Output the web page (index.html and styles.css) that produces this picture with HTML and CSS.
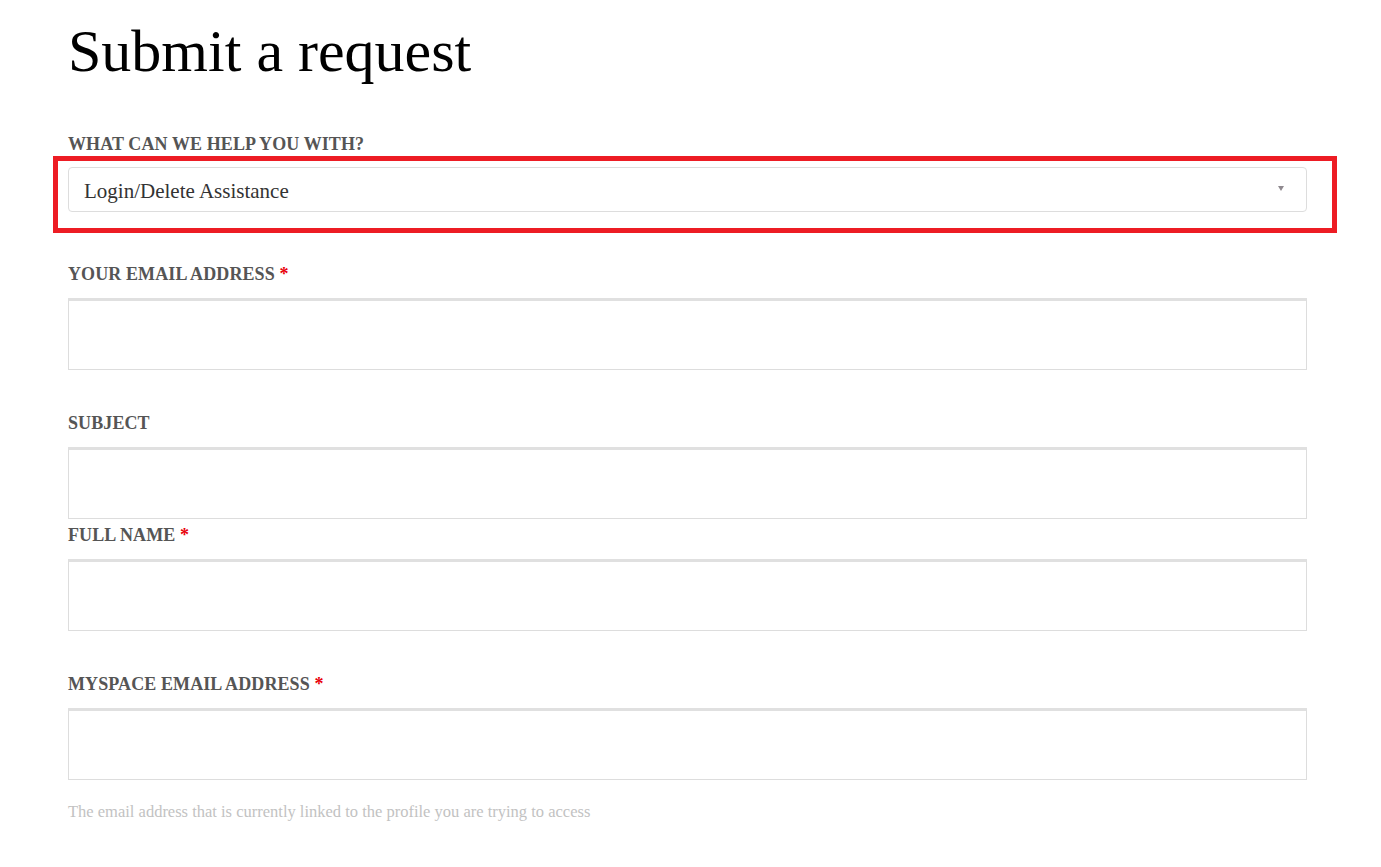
FILE: index.html
```html
<!DOCTYPE html>
<html lang="en">
  <head>
    <meta charset="UTF-8" />
    <title>Submit a request</title>
    <link rel="stylesheet" href="styles.css">
  </head>
  <body>
    <div class="request-page">
      <h1>Submit a request</h1>

      <form class="request-form">
        <div class="form-field field-type">
          <label for="ticketForm">What can we help you with?</label>
          <div class="highlight">
            <div class="select-wrap">
              <select id="ticketForm">
                <option>Login/Delete Assistance</option>
                <option>Account Settings</option>
                <option>Other</option>
              </select>
              <span class="select-arrow"></span>
            </div>
          </div>
        </div>

        <div class="form-field">
          <label for="email">Your email address <span class="required">*</span></label>
          <input type="email" id="email" />
        </div>

        <div class="form-field field-tight">
          <label for="subject">Subject</label>
          <input type="text" id="subject" />
        </div>

        <div class="form-field">
          <label for="fullName">Full name <span class="required">*</span></label>
          <input type="text" id="fullName" />
        </div>

        <div class="form-field">
          <label for="myspaceEmail">Myspace email address <span class="required">*</span></label>
          <input type="email" id="myspaceEmail" />
          <p class="hint">The email address that is currently linked to the profile you are trying to access</p>
        </div>
      </form>
    </div>
  </body>
</html>
```

FILE: styles.css
```css
body {
  margin: 0;
  font-family: "Liberation Serif", "Times New Roman", serif;
  background-color: #fff;
  color: #000;
}
.request-page {
  padding: 21px 74px 40px 68px;
}
h1 {
  margin: 0 0 52px;
  font-size: 60px;
  line-height: 60px;
  font-weight: normal;
}
.form-field {
  margin-bottom: 42px;
}
.form-field label {
  display: block;
  margin-bottom: 13px;
  font-size: 18px;
  line-height: 22px;
  font-weight: bold;
  letter-spacing: 0.1px;
  text-transform: uppercase;
  color: #555;
}
.field-type {
  margin-bottom: 30px;
}
.field-type label {
  margin-bottom: 1px;
}
.field-tight {
  margin-bottom: 5px;
}
.required {
  color: #e8000b;
}
.highlight {
  margin: 0 -30px 0 -15px;
  padding: 6px 25px 16px 10px;
  border: 5px solid #ed1c24;
}
.select-wrap {
  position: relative;
}
.select-wrap select {
  display: block;
  width: 100%;
  height: 45px;
  box-sizing: border-box;
  padding: 2px 15px 0;
  border: 1px solid #ddd;
  border-radius: 4px;
  background-color: #fff;
  font-family: "Liberation Serif", "Times New Roman", serif;
  font-size: 21px;
  color: #333;
  appearance: none;
  -webkit-appearance: none;
}
.select-arrow {
  position: absolute;
  right: 23px;
  top: 19px;
  width: 0;
  height: 0;
  border-left: 3.5px solid transparent;
  border-right: 3.5px solid transparent;
  border-top: 5px solid #8f898f;
  pointer-events: none;
}
.form-field input {
  display: block;
  width: 100%;
  height: 72px;
  box-sizing: border-box;
  padding: 0 15px;
  border: 1px solid #ddd;
  border-top: 3px solid #e0e0e0;
  background-color: #fff;
  font-family: "Liberation Serif", "Times New Roman", serif;
  font-size: 18px;
}
.hint {
  margin: 22px 0 0;
  font-size: 16.5px;
  line-height: 20px;
  color: #c2c2c2;
}
```
